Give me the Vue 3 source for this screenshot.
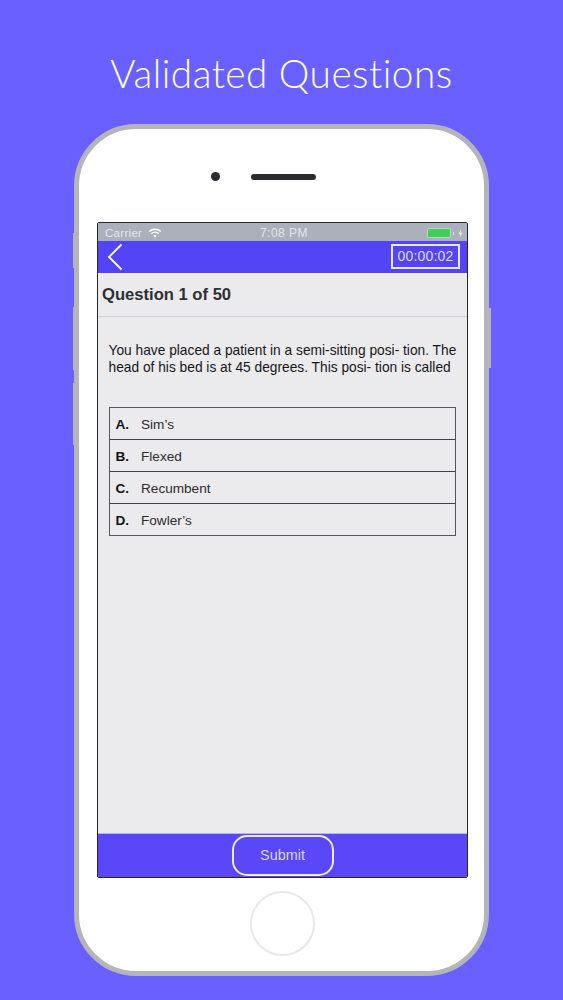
<script setup>
const options = [
  { key: 'A.', text: 'Sim’s' },
  { key: 'B.', text: 'Flexed' },
  { key: 'C.', text: 'Recumbent' },
  { key: 'D.', text: 'Fowler’s' }
]
</script>

<template>
  <div class="page">
    <h1 class="title">Validated Questions</h1>
    <div class="phone">
      <span class="side side-l1"></span>
      <span class="side side-l2"></span>
      <span class="side side-l3"></span>
      <span class="side side-r1"></span>
      <div class="top">
        <span class="camera"></span>
        <span class="speaker"></span>
      </div>
      <div class="screen">
        <div class="status">
          <div class="status-left">
            <span>Carrier</span>
            <svg class="wifi" viewBox="0 0 16 12" width="14" height="10">
              <path d="M1 4.2C5 .6 11 .6 15 4.2" fill="none" stroke="#fff" stroke-width="1.7" />
              <path d="M3.6 6.8c2.6-2.2 6.2-2.2 8.8 0" fill="none" stroke="#fff" stroke-width="1.7" />
              <path d="M6 9.2c1.2-1 2.8-1 4 0L8 11.4z" fill="#fff" />
            </svg>
          </div>
          <span class="clock">7:08 PM</span>
          <div class="status-right">
            <span class="battery"></span>
            <span class="nub"></span>
            <svg class="bolt" viewBox="0 0 6 10" width="5" height="9">
              <path d="M3.8 0 .6 5.6h2L2 10l3.4-6H3.2z" fill="#e6e8ee" />
            </svg>
          </div>
        </div>
        <div class="nav">
          <svg class="back" viewBox="0 0 16 28" width="16" height="28">
            <path d="M14.5 1.5 2 14l12.5 12.5" fill="none" stroke="#fff" stroke-width="1.8" />
          </svg>
          <span class="timer">00:00:02</span>
        </div>
        <div class="heading">Question 1 of 50</div>
        <div class="body">
          <p class="question">You have placed a patient in a semi-sitting posi- tion. The head of his bed is at 45 degrees. This posi- tion is called</p>
          <ul class="options">
            <li v-for="o in options" :key="o.key" class="option">
              <b class="key">{{ o.key }}</b>
              <span>{{ o.text }}</span>
            </li>
          </ul>
        </div>
        <div class="footer">
          <button class="submit">Submit</button>
        </div>
      </div>
      <div class="bottom">
        <span class="home"></span>
      </div>
    </div>
  </div>
</template>

<style scoped>
.page {
  width: 563px;
  height: 1000px;
  box-sizing: border-box;
  background: #6a60ff;
  padding-top: 48px;
  overflow: hidden;
  font-family: "Liberation Sans", Arial, sans-serif;
}
.title {
  margin: 0 0 26px;
  height: 50px;
  line-height: 50px;
  text-align: center;
  font-family: Lato, sans-serif;
  font-weight: 300;
  font-size: 38.7px;
  letter-spacing: 0.5px;
  color: #fff;
}
.phone {
  position: relative;
  box-sizing: border-box;
  width: 415px;
  height: 852px;
  margin-left: 74px;
  background: #fff;
  border: 5px solid #b4b5bb;
  border-radius: 62px;
  display: flex;
  flex-direction: column;
  align-items: center;
}
.side {
  position: absolute;
  width: 1.5px;
  background: #b4b5bb;
}
.side-l1 { left: -6.5px; top: 104px; height: 35px; }
.side-l2 { left: -6.5px; top: 178px; height: 63px; }
.side-l3 { left: -6.5px; top: 254px; height: 62px; }
.side-r1 { right: -6.5px; top: 179px; height: 60px; }
.top {
  height: 93px;
  flex: none;
  display: flex;
  align-items: center;
  align-self: flex-start;
  box-sizing: border-box;
  padding: 2px 0 0 132px;
  gap: 31px;
}
.camera {
  width: 9px;
  height: 9px;
  border-radius: 50%;
  background: #2b2b2f;
}
.speaker {
  width: 65px;
  height: 6px;
  border-radius: 3px;
  background: #2b2b2f;
}
.screen {
  box-sizing: border-box;
  width: 371px;
  height: 655.5px;
  flex: none;
  margin-left: 2px;
  border: 1.5px solid #26262c;
  border-radius: 2px;
  background: #ebeaed;
  display: flex;
  flex-direction: column;
  overflow: hidden;
}
.status {
  height: 17.5px;
  flex: none;
  box-sizing: border-box;
  background: #abb0ba;
  display: grid;
  grid-template-columns: 1fr auto 1fr;
  align-items: center;
  padding: 3px 4px 0 7px;
  font-size: 11.5px;
  color: #e4e6ec;
}
.status-left {
  display: flex;
  align-items: center;
  gap: 6px;
  letter-spacing: 0.3px;
}
.clock {
  font-size: 12px;
  letter-spacing: 0.5px;
}
.status-right {
  display: flex;
  align-items: center;
  justify-content: flex-end;
  gap: 2px;
}
.battery {
  width: 22px;
  height: 8px;
  background: #3fd058;
  border-radius: 1px;
  box-shadow: 0 0 0 1px #b6d8be;
}
.nub {
  width: 1px;
  height: 3px;
  margin-left: 1px;
  background: #d8dce2;
}
.bolt { margin-left: 2px; }
.nav {
  height: 32px;
  flex: none;
  background: #5345f5;
  display: flex;
  align-items: center;
  justify-content: space-between;
  padding: 0 7px 0 9px;
}
.timer {
  box-sizing: border-box;
  width: 69px;
  height: 25px;
  border: 2px solid #e8e6fb;
  color: #dcdafb;
  font-size: 14px;
  line-height: 21px;
  text-align: center;
  letter-spacing: 0.2px;
}
.heading {
  height: 44px;
  flex: none;
  line-height: 43px;
  padding-left: 4px;
  box-sizing: border-box;
  border-bottom: 1px solid #cfced2;
  font-weight: 700;
  font-size: 16.6px;
  color: #2f2f33;
}
.body {
  flex: 1;
  padding: 25px 11px 0 10.5px;
}
.question {
  margin: 0 -4px 30px 0;
  font-size: 13.75px;
  line-height: 17.5px;
  color: #17171a;
}
.options {
  list-style: none;
  margin: 0;
  padding: 0;
  border: 1px solid #55565c;
}
.option {
  height: 32px;
  box-sizing: border-box;
  display: flex;
  align-items: center;
  padding: 2px 0 0 6px;
  font-size: 13.6px;
  color: #2b2b30;
  border-top: 1px solid #3f4046;
}
.option:first-child {
  height: 31px;
  border-top: 0;
}
.key {
  width: 25.5px;
  color: #141416;
  font-weight: 700;
}
.footer {
  height: 43.5px;
  flex: none;
  background: #5a48f8;
  border-top: 1px solid #b9b6f5;
  box-sizing: border-box;
  display: flex;
  justify-content: center;
  align-items: flex-end;
  padding-bottom: 1px;
}
.submit {
  box-sizing: border-box;
  width: 102px;
  height: 41px;
  background: transparent;
  border: 2px solid #ecebfd;
  border-radius: 15px;
  color: #d9d7fb;
  font-family: inherit;
  font-size: 14.4px;
  padding: 0;
}
.bottom {
  flex: 1;
  display: flex;
  justify-content: center;
  align-items: flex-start;
  padding-top: 13px;
  margin-left: 2px;
}
.home {
  box-sizing: border-box;
  width: 65px;
  height: 65px;
  border-radius: 50%;
  border: 2px solid #e8e8e8;
}
</style>
